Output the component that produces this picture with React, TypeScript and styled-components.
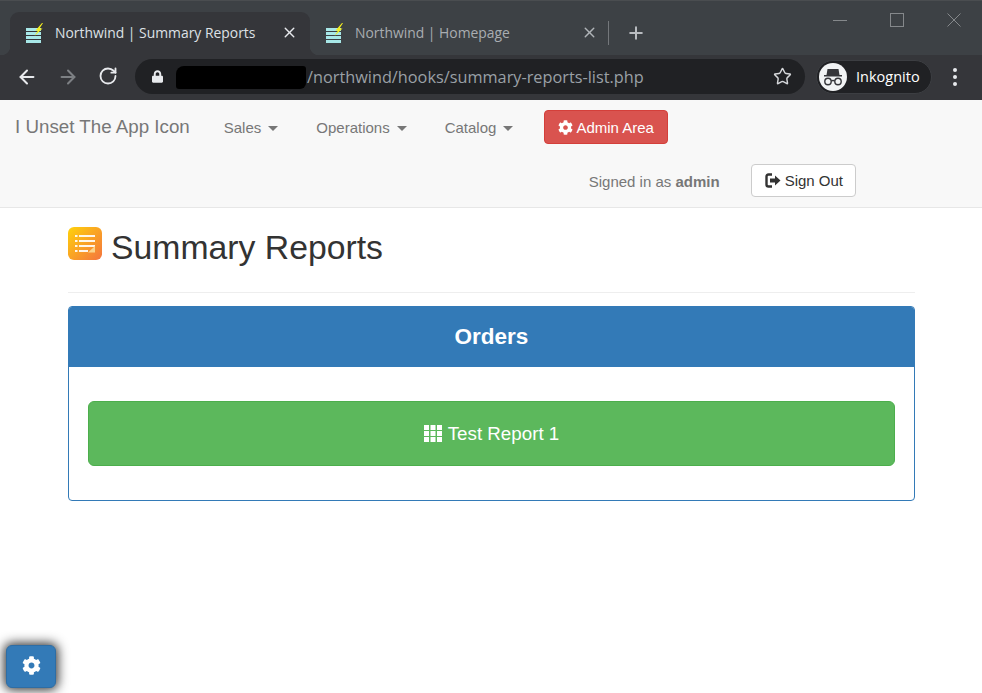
import React from 'react'
import styled, { createGlobalStyle } from 'styled-components'
import { ArrowLeft, ArrowRight, RotateCw, Star, X, Plus } from 'lucide-react'
import { FaCog, FaLock } from 'react-icons/fa'

const GlobalStyle = createGlobalStyle`
  html, body { margin: 0; padding: 0; background: #fff; }
  body { font-family: "Liberation Sans", Arial, sans-serif; font-size: 15px; color: #333; }
  * { box-sizing: border-box; }
`

const TabStrip = styled.div`
  height: 55px;
  background: #3d4145;
  border-top: 1px solid #4a4d50;
  padding: 11px 0 0 10px;
  display: flex;
  font-family: "Open Sans", "Noto Sans", sans-serif;
`

const Tab = styled.div<{ $active?: boolean }>`
  position: relative;
  width: 300px;
  height: 43px;
  padding: 0 12px 2px 15px;
  display: flex;
  align-items: center;
  border-radius: 9px 9px 0 0;
  background: ${p => (p.$active ? '#35363a' : 'transparent')};
  color: ${p => (p.$active ? '#dee1e6' : '#a9adb1')};
  font-size: 13.9px;
  ${p =>
    p.$active &&
    `
    &::before, &::after {
      content: '';
      position: absolute;
      bottom: 0;
      width: 9px;
      height: 9px;
    }
    &::before { left: -9px; background: radial-gradient(circle at 0 0, transparent 9px, #35363a 9.5px); }
    &::after { right: -9px; background: radial-gradient(circle at 100% 0, transparent 9px, #35363a 9.5px); }
  `}
`

const TabTitle = styled.span`
  flex: 1;
  margin-left: 11px;
  white-space: nowrap;
`

const TabClose = styled(X)<{ $active?: boolean }>`
  width: 17px;
  height: 17px;
  color: ${p => (p.$active ? '#e8eaed' : '#b0b4b8')};
`

const TabDivider = styled.div`
  width: 1px;
  height: 24px;
  margin: 9px 0 0 -2px;
  background: #74777b;
`

const NewTab = styled.div`
  width: 54px;
  height: 41px;
  display: flex;
  align-items: center;
  justify-content: center;
  color: #b9bcc0;
`

const WindowControls = styled.div`
  margin: -3px 0 0 auto;
  padding-right: 21px;
  display: flex;
  gap: 43px;
  height: 22px;
  align-items: center;
  color: #85888b;
`

const Toolbar = styled.div`
  height: 45px;
  background: #35363a;
  display: flex;
  align-items: center;
  padding: 0 16px 2px 16px;
  font-family: "Open Sans", "Noto Sans", sans-serif;
`

const NavIcons = styled.div`
  width: 119px;
  display: flex;
  gap: 19px;
  color: #e8eaed;
`

const Omnibox = styled.div`
  width: 670px;
  height: 35px;
  border-radius: 18px;
  background: #202124;
  display: flex;
  align-items: center;
  padding: 0 13px 0 17px;
  color: #9aa0a6;
  font-size: 16.3px;
`

const LockIcon = styled(FaLock)`
  width: 11px;
  height: 13px;
  color: #e8eaed;
`

const Redaction = styled.span`
  width: 130px;
  height: 23px;
  margin: 2px 1px 0 13px;
  background: #000;
  border-radius: 8px 3px 6px 3px;
`

const UrlText = styled.span`
  flex: 1;
  white-space: nowrap;
`

const ProfilePill = styled.div`
  width: 116px;
  height: 34px;
  margin-left: 11px;
  border-radius: 17px;
  background: #202124;
  border: 1px solid #3c3e42;
  display: flex;
  align-items: center;
  padding-left: 2px;
  gap: 9px;
  color: #fff;
  font-size: 14.5px;
`

const Avatar = styled.div`
  width: 28px;
  height: 28px;
  border-radius: 50%;
  background: #f1f3f4;
  display: flex;
  align-items: center;
  justify-content: center;
`

const MenuDots = styled.div`
  margin-left: 21px;
  display: flex;
  flex-direction: column;
  gap: 3px;
`

const Dot = styled.span`
  width: 4px;
  height: 4px;
  border-radius: 50%;
  background: #e8eaed;
`

const Navbar = styled.nav`
  height: 108px;
  background: #f8f8f8;
  border-bottom: 1px solid #e7e7e7;
`

const NavRow = styled.div`
  height: 54px;
  display: flex;
  align-items: center;
`

const NavRowEnd = styled(NavRow)`
  justify-content: flex-end;
  padding-right: 126px;
  gap: 31px;
`

const Brand = styled.span`
  margin: 0 19px 0 15px;
  font-size: 18.75px;
  color: #777;
  white-space: nowrap;
`

const NavItem = styled.span`
  padding: 0 15px;
  margin-right: 8px;
  color: #777;
  display: flex;
  align-items: center;
  gap: 6px;
`

const Caret = styled.span`
  width: 0;
  height: 0;
  margin: 2px 0 0 1px;
  border-top: 5px solid #777;
  border-left: 5px solid transparent;
  border-right: 5px solid transparent;
`

const DangerButton = styled.button`
  height: 34px;
  margin-left: 8px;
  padding: 0 13px;
  background: #d9534f;
  border: 1px solid #d43f3a;
  border-radius: 4px;
  color: #fff;
  font: inherit;
  display: flex;
  align-items: center;
  gap: 3px;
`

const SignedIn = styled.span`
  color: #777;
`

const DefaultButton = styled.button`
  height: 33px;
  margin-top: -1px;
  padding: 0 12px 0 13px;
  background: #fff;
  border: 1px solid #ccc;
  border-radius: 4px;
  color: #333;
  font: inherit;
  display: flex;
  align-items: center;
  gap: 4px;
`

const Container = styled.main`
  margin: 0 67px 0 68px;
`

const PageHeader = styled.div`
  height: 85px;
  padding-top: 19px;
  border-bottom: 1px solid #eee;
  display: flex;
  align-items: flex-start;
  gap: 9px;
`

const Title = styled.h1`
  margin: 0;
  font-size: 33.75px;
  font-weight: 400;
  line-height: 40px;
  color: #333;
`

const Panel = styled.section`
  margin-top: 13px;
  border: 1px solid #337ab7;
  border-radius: 4px;
  overflow: hidden;
`

const PanelHeading = styled.h3`
  margin: 0;
  height: 60px;
  background: #337ab7;
  color: #fff;
  font-size: 22.5px;
  font-weight: 700;
  display: flex;
  align-items: center;
  justify-content: center;
`

const PanelBody = styled.div`
  padding: 34px 19px;
`

const ReportButton = styled.a`
  height: 65px;
  background: #5cb85c;
  border: 1px solid #4cae4c;
  border-radius: 6px;
  color: #fff;
  font-size: 18.75px;
  display: flex;
  align-items: center;
  justify-content: center;
  gap: 6px;
`

const SettingsButton = styled.button`
  position: fixed;
  left: 6px;
  bottom: 5px;
  width: 50px;
  height: 43px;
  padding: 0 0 3px;
  background: #337ab7;
  border: 1px solid #2e6da4;
  border-radius: 6px;
  box-shadow: 0 0 11px 2px #333;
  color: #fff;
  display: flex;
  align-items: center;
  justify-content: center;
`

const Favicon = () => (
  <svg width="19" height="20" viewBox="0 0 19 20">
    <g fill="#a8e8e8">
      <rect x="1" y="5" width="15" height="3" />
      <rect x="1" y="9" width="15" height="3" />
      <rect x="1" y="13" width="15" height="3" />
      <rect x="1" y="17" width="15" height="3" />
    </g>
    <path d="M17 0 L10.5 7.5 L13 7.5 L9.5 13 L17.5 5.5 L14.5 5.5 L18 0 Z" fill="#f4ee1e" />
  </svg>
)

const IncognitoIcon = () => (
  <svg width="22" height="18" viewBox="0 0 22 18">
    <path d="M5.5 1 H16.5 L17.5 7 H20 V8.5 H2 V7 H4.5 Z" fill="#35363a" />
    <g fill="none" stroke="#35363a" strokeWidth="1.4">
      <circle cx="6" cy="13.5" r="3.2" />
      <circle cx="16" cy="13.5" r="3.2" />
      <path d="M9.2 13 Q11 12 12.8 13" />
    </g>
  </svg>
)

const ReportsIcon = () => (
  <svg width="34" height="34" viewBox="0 0 34 34">
    <defs>
      <linearGradient id="reportsGrad" x1="0" y1="0" x2="1" y2="1">
        <stop offset="0" stopColor="#ffd20a" />
        <stop offset="1" stopColor="#f4743f" />
      </linearGradient>
    </defs>
    <rect width="34" height="33" rx="6" fill="url(#reportsGrad)" />
    <g fill="#fff" fillOpacity="0.9">
      <rect x="7" y="8" width="2.5" height="2" />
      <rect x="11" y="8" width="16" height="2" />
      <rect x="7" y="13" width="2.5" height="2" />
      <rect x="11" y="13" width="16" height="2" />
      <rect x="7" y="18" width="2.5" height="2" />
      <rect x="11" y="18" width="16" height="2" />
      <rect x="7" y="23" width="2.5" height="2" />
      <rect x="11" y="23" width="9" height="2" />
    </g>
    <path d="M20 25.5 L27 19 L27 25.5 Z" fill="#fbd38a" />
  </svg>
)

const SignOutIcon = () => (
  <svg width="16" height="15" viewBox="0 0 16 15">
    <path d="M7 1.5 H3.5 Q1.5 1.5 1.5 3.5 V11.5 Q1.5 13.5 3.5 13.5 H7" fill="none" stroke="#333" strokeWidth="2.4" />
    <path d="M5 5.5 H10 V2.5 L15.5 7.5 L10 12.5 V9.5 H5 Z" fill="#333" />
  </svg>
)

const GridIcon = () => (
  <svg width="18" height="17" viewBox="0 0 18 17" fill="#fff">
    {[0, 6, 12].map(y =>
      [0, 6.5, 13].map(x => <rect key={`${x}-${y}`} x={x} y={y} width="5" height="5" />)
    )}
  </svg>
)

const App: React.FC = () => {
  return (
    <>
      <GlobalStyle />
      <TabStrip>
        <Tab $active>
          <Favicon />
          <TabTitle>Northwind | Summary Reports</TabTitle>
          <TabClose $active />
        </Tab>
        <Tab>
          <Favicon />
          <TabTitle>Northwind | Homepage</TabTitle>
          <TabClose />
        </Tab>
        <TabDivider />
        <NewTab>
          <Plus size={20} strokeWidth={2.4} />
        </NewTab>
        <WindowControls>
          <svg width="14" height="14" viewBox="0 0 14 14"><path d="M0 7.5 H14" stroke="currentColor" /></svg>
          <svg width="14" height="14" viewBox="0 0 14 14"><rect x=".5" y=".5" width="13" height="13" fill="none" stroke="currentColor" /></svg>
          <svg width="14" height="14" viewBox="0 0 14 14"><path d="M.5 .5 L13.5 13.5 M13.5 .5 L.5 13.5" stroke="currentColor" /></svg>
        </WindowControls>
      </TabStrip>
      <Toolbar>
        <NavIcons>
          <ArrowLeft size={22} strokeWidth={2.2} />
          <ArrowRight size={22} strokeWidth={2.2} color="#7d8084" />
          <RotateCw size={20} strokeWidth={2.2} />
        </NavIcons>
        <Omnibox>
          <LockIcon />
          <Redaction />
          <UrlText>/northwind/hooks/summary-reports-list.php</UrlText>
          <Star size={19} strokeWidth={1.8} color="#d5d7da" />
        </Omnibox>
        <ProfilePill>
          <Avatar>
            <IncognitoIcon />
          </Avatar>
          Inkognito
        </ProfilePill>
        <MenuDots>
          <Dot />
          <Dot />
          <Dot />
        </MenuDots>
      </Toolbar>
      <Navbar>
        <NavRow>
          <Brand>I Unset The App Icon</Brand>
          <NavItem>Sales <Caret /></NavItem>
          <NavItem>Operations <Caret /></NavItem>
          <NavItem>Catalog <Caret /></NavItem>
          <DangerButton><FaCog size={15} /> Admin Area</DangerButton>
        </NavRow>
        <NavRowEnd>
          <SignedIn>Signed in as <b>admin</b></SignedIn>
          <DefaultButton><SignOutIcon /> Sign Out</DefaultButton>
        </NavRowEnd>
      </Navbar>
      <Container>
        <PageHeader>
          <ReportsIcon />
          <Title>Summary Reports</Title>
        </PageHeader>
        <Panel>
          <PanelHeading>Orders</PanelHeading>
          <PanelBody>
            <ReportButton><GridIcon /> Test Report 1</ReportButton>
          </PanelBody>
        </Panel>
      </Container>
      <SettingsButton><FaCog size={19} /></SettingsButton>
    </>
  )
}

export default App
